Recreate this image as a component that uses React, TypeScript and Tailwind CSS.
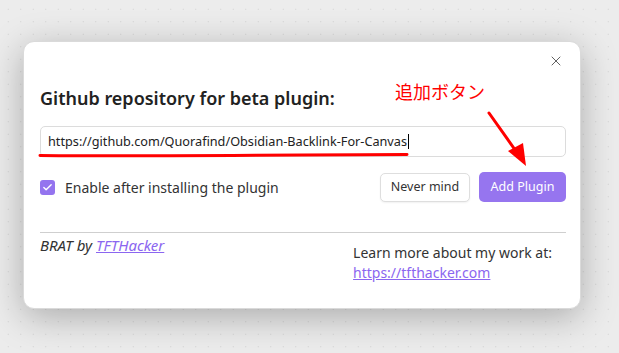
import { X, Check } from "lucide-react";

const App = () => {
  return (
    <div
      className="relative h-[353px] w-[619px] overflow-hidden bg-[#ececec] bg-[radial-gradient(#cfcfcf_0.8px,transparent_0.9px)] bg-[length:12.5px_12.5px] bg-[position:2px_3px] text-[#222] font-['Noto_Sans',sans-serif]"
    >
      <div className="pt-[41px] pl-[23px]">
        <div className="relative flex h-[268px] w-[558px] flex-col rounded-[11px] border border-[#dadada] bg-white px-[16px] pt-[16px] shadow-[0_8px_36px_rgba(0,0,0,0.28)]">
          <button className="absolute right-[16px] top-[11px] text-[#555]">
            <X size={16} strokeWidth={1.4} />
          </button>

          <h2 className="mt-[28px] text-[18px] font-semibold leading-[24px] text-[#222]">
            Github repository for beta plugin:
          </h2>

          <div className="mt-[16px] flex h-[31px] w-[526px] items-center rounded-[5px] border border-[#dcdcdc] bg-white px-[7px] text-[12.7px] text-[#222]">
            <span>https://github.com/Quorafind/Obsidian-Backlink-For-Canvas</span>
            <span className="ml-[1px] h-[15px] w-[1px] bg-black" />
          </div>

          <div className="mt-[15px] flex w-[526px] items-center justify-between">
            <label className="flex items-center gap-[10px] text-[14px] text-[#333]">
              <span className="flex h-[15px] w-[15px] items-center justify-center rounded-[3px] bg-[#9474ef] text-white">
                <Check size={11} strokeWidth={3} />
              </span>
              Enable after installing the plugin
            </label>
            <div className="flex items-center gap-[9px]">
              <button className="h-[29px] w-[90px] rounded-[5px] border border-[#dedede] bg-white text-[12.5px] text-[#333] shadow-[0_1px_2px_rgba(0,0,0,0.06)]">
                Never mind
              </button>
              <button className="h-[30px] w-[87px] rounded-[5px] bg-[#9675ef] text-[12.5px] text-white">
                Add Plugin
              </button>
            </div>
          </div>

          <div className="mt-[30px] w-[526px] border-t border-[#cfcfcf]" />

          <div className="flex w-[526px] justify-between text-[14px]">
            <div className="pt-[1px] text-[15px] italic text-[#333]">
              BRAT by{" "}
              <a className="text-[#8b66f0] underline" href="#">
                TFTHacker
              </a>
            </div>
            <div className="mr-[14px] mt-[10px] leading-[20px] text-[#333]">
              <div>Learn more about my work at:</div>
              <a className="text-[#8b66f0] underline" href="#">
                https://tfthacker.com
              </a>
            </div>
          </div>
        </div>
      </div>

      {/* annotation overlay */}
      <div className="absolute left-[395px] top-[80px] text-[18px] leading-[22px] text-[#ff0000] font-['Noto_Sans_CJK_JP',sans-serif]">
        追加ボタン
      </div>
      <svg className="absolute left-0 top-0" width="619" height="353">
        <path
          d="M40 155.5 C 120 156.5, 250 155, 407 154.5"
          stroke="#ff0000"
          strokeWidth="3"
          fill="none"
          strokeLinecap="round"
        />
        <line x1="489" y1="113" x2="518" y2="154" stroke="#ff0000" strokeWidth="3" strokeLinecap="round" />
        <polygon points="508,151 526,166 523,143" fill="#ff0000" />
      </svg>
    </div>
  );
};

export default App;
